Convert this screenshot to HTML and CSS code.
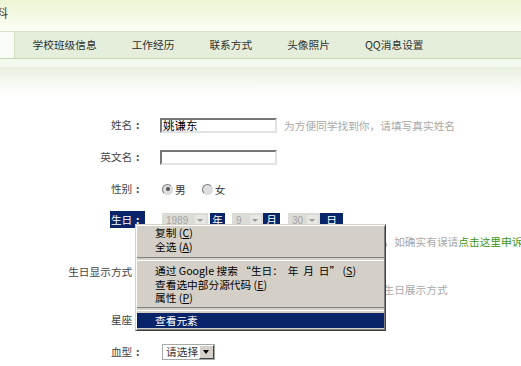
FILE: index.html
```html
<!DOCTYPE html>
<html lang="zh-CN">
<head>
<meta charset="utf-8">
<title>个人资料</title>
<link rel="stylesheet" href="styles.css">
</head>
<body>
<div class="page">
  <div class="header"><span class="title">个人资料</span></div>
  <div class="tabs">
    <div class="tab-first"></div>
    <div class="tab">学校班级信息</div>
    <div class="tab">工作经历</div>
    <div class="tab">联系方式</div>
    <div class="tab">头像照片</div>
    <div class="tab">QQ消息设置</div>
  </div>
  <div class="band"></div>
  <div class="fade"></div>

  <div class="form">
    <div class="row">
      <div class="label">姓名<span class="colon">:</span></div>
      <div class="value">
        <div class="line"><span class="input">姚谦东</span><span class="hint">为方便同学找到你，请填写真实姓名</span></div>
      </div>
    </div>
    <div class="row">
      <div class="label">英文名<span class="colon">:</span></div>
      <div class="value">
        <div class="line"><span class="input"></span></div>
      </div>
    </div>
    <div class="row row-short">
      <div class="label">性别<span class="colon">:</span></div>
      <div class="value">
        <div class="line"><span class="radio checked"></span><span class="opt">男</span><span class="radio"></span><span class="opt">女</span></div>
      </div>
    </div>
    <div class="row row-birth">
      <div class="label"><span class="picked">生日<span class="colon">:</span></span></div>
      <div class="value">
        <div class="line">
          <span class="bsel ysel">1989<i class="barr"></i></span><span class="hl">年</span>
          <span class="bsel msel">9<i class="barr"></i></span><span class="hl">月</span>
          <span class="bsel dsel">30<i class="barr"></i></span><span class="hl hl-last">日</span>
        </div>
        <div class="line line-gap5"><span class="hint">生日信息一经保存后将不能再由你自己进行修改，如确实有误请<a class="link">点击这里申诉</a></span></div>
      </div>
    </div>
    <div class="row row-show">
      <div class="label">生日显示方式<span class="colon">:</span></div>
      <div class="value">
        <div class="line"><span class="radio checked"></span><span class="opt">显示</span><span class="radio"></span><span class="opt">隐藏</span></div>
        <div class="line line-gap1"><span class="hint">你可以选择其他同学在你的个人主页上所看到的生日展示方式</span></div>
      </div>
    </div>
    <div class="row">
      <div class="label">星座<span class="colon">:</span></div>
      <div class="value">
        <div class="line"><span class="psel">白羊座<i class="pbtn"></i></span></div>
      </div>
    </div>
    <div class="row">
      <div class="label">血型<span class="colon">:</span></div>
      <div class="value">
        <div class="line"><span class="psel">请选择<i class="pbtn"></i></span></div>
      </div>
    </div>
  </div>

  <div class="menu">
    <div class="mi">复制 (<u>C</u>)</div>
    <div class="mi">全选 (<u>A</u>)</div>
    <div class="msep"></div>
    <div class="mi">通过 Google 搜索 “生日：  年  月  日” (<u>S</u>)</div>
    <div class="mi">查看选中部分源代码 (<u>E</u>)</div>
    <div class="mi">属性 (<u>P</u>)</div>
    <div class="msep msep-small"></div>
    <div class="mi mi-active">查看元素</div>
  </div>
</div>
</body>
</html>
```

FILE: styles.css
```css
* { box-sizing: border-box; margin: 0; padding: 0; }

html, body {
  width: 521px;
  height: 366px;
  overflow: hidden;
  background: #fff;
}

body {
  font-family: "Noto Sans CJK SC", "Noto Sans", sans-serif;
  font-size: 10.7px;
  color: #333;
}

.page {
  position: relative;
  width: 521px;
  height: 366px;
}

/* header */
.header {
  height: 31px;
  padding-top: 6px;
  background: linear-gradient(#edf5d3, #fbfdf5);
  font-size: 12px;
  line-height: 14px;
  color: #333;
  white-space: nowrap;
}
.title { margin-left: -40px; }

/* tabs */
.tabs {
  display: flex;
  height: 28px;
  background: #e5eedb;
  border-top: 1px solid #d6e2c8;
  border-bottom: 1px solid #c6d6b1;
  line-height: 26px;
  color: #2e2e2e;
}
.tab-first {
  width: 15px;
  background: #fafdf7;
  border-right: 1px solid #cfdcc2;
}
.tab {
  padding: 0 17.5px;
  white-space: nowrap;
}
.band { height: 8px; background: #f4f9ef; }
.fade {
  height: 42px;
  background: linear-gradient(#e8f0df, #ffffff 68%);
}

/* form */
.row {
  display: flex;
  align-items: flex-start;
  height: 32px;
  padding-top: 8px;
}
.row-short { height: 31px; }
.row-birth { height: 52px; }
.row-show { height: 48px; }

.label {
  width: 143px;
  flex: none;
  text-align: right;
  line-height: 16px;
  color: #444;
  white-space: nowrap;
}
.colon {
  display: inline-block;
  width: 10.7px;
  text-align: center;
  font-weight: 700;
}
.picked {
  background: #0a246a;
  color: #fff;
  padding: 1px 2px 1px 1px;
  margin-right: -2px;
}
.value { margin-left: 17px; }
.line {
  display: flex;
  align-items: center;
  height: 16px;
  white-space: nowrap;
}
.line-gap5 { margin-top: 5px; }
.line-gap1 { margin-top: 1px; }

.input {
  display: inline-block;
  width: 117px;
  height: 15px;
  border: 2px solid;
  border-color: #777 #e2e2e2 #e2e2e2 #777;
  background: #fff;
  padding-left: 1px;
  font-size: 11.5px;
  line-height: 11px;
  color: #000;
}
.hint {
  margin-left: 7px;
  color: #a8a8a8;
}
.line-gap5 .hint, .line-gap1 .hint { margin-left: -1px; }
.link { color: #3b9412; text-decoration: none; }

.radio {
  display: inline-block;
  position: relative;
  width: 11px;
  height: 11px;
  border-radius: 50%;
  border: 1px solid;
  border-color: #7c7c7c #d8d8d8 #d8d8d8 #7c7c7c;
  background: #dedede;
  margin-left: 2px;
}
.radio.checked::after {
  content: "";
  position: absolute;
  left: 2.5px;
  top: 2.5px;
  width: 4px;
  height: 4px;
  border-radius: 50%;
  background: #555;
}
.opt { margin: 0 14px 0 2px; }

/* birthday selects */
.bsel {
  position: relative;
  display: inline-block;
  height: 15px;
  line-height: 15px;
  background: #dcdcd6;
  color: #a4a4a4;
  padding-left: 4px;
  font-family: "Liberation Sans", sans-serif;
  font-size: 10px;
}
.ysel { width: 46px; margin-left: 2px; }
.msel { width: 31px; margin-left: 7px; }
.dsel { width: 32px; margin-left: 8px; }
.barr {
  position: absolute;
  right: 2px;
  top: 2px;
  width: 11px;
  height: 11px;
  background: #e6e6e2;
}
.barr::after {
  content: "";
  position: absolute;
  left: 2px;
  top: 4px;
  border-left: 3.5px solid transparent;
  border-right: 3.5px solid transparent;
  border-top: 3.5px solid #9a9a9a;
}
.hl {
  display: inline-block;
  height: 14px;
  line-height: 14px;
  width: 17px;
  text-align: center;
  background: #0a246a;
  color: #fff;
}
.ysel + .hl { margin-left: 2px; width: 15px; }
.hl-last { width: 23px; }

/* plain select */
.psel {
  position: relative;
  display: inline-block;
  width: 53px;
  height: 16px;
  line-height: 14px;
  border: 1px solid #a3aaa3;
  background: #fff;
  padding-left: 3px;
  margin-left: 2px;
  color: #333;
}
.pbtn {
  position: absolute;
  right: 0;
  top: 0;
  width: 15px;
  height: 14px;
  background: #d4d0c8;
  border: 1px solid;
  border-color: #fff #404040 #404040 #fff;
}
.pbtn::after {
  content: "";
  position: absolute;
  left: 3px;
  top: 4px;
  border-left: 3.5px solid transparent;
  border-right: 3.5px solid transparent;
  border-top: 4px solid #000;
}

/* context menu */
.menu {
  position: absolute;
  left: 135px;
  top: 224px;
  width: 251px;
  background: #d4d0c8;
  border: 1px solid;
  border-color: #d4d0c8 #404040 #404040 #d4d0c8;
  box-shadow: inset 1px 1px #fff, inset -1px -1px #808080;
  padding: 1px 1px 2px 1px;
  color: #000;
  font-size: 10.7px;
}
.mi {
  height: 13.5px;
  line-height: 13.5px;
  padding-left: 18px;
  white-space: pre;
}
.mi u { text-decoration: underline; }
.mi-active {
  height: 15px;
  line-height: 15px;
  background: #0a246a;
  color: #fff;
}
.msep {
  display: flex;
  align-items: center;
  height: 11px;
}
.msep-small { height: 8px; }
.msep::before {
  content: "";
  flex: 1;
  height: 2px;
  border-top: 1px solid #808080;
  border-bottom: 1px solid #fff;
}
```
